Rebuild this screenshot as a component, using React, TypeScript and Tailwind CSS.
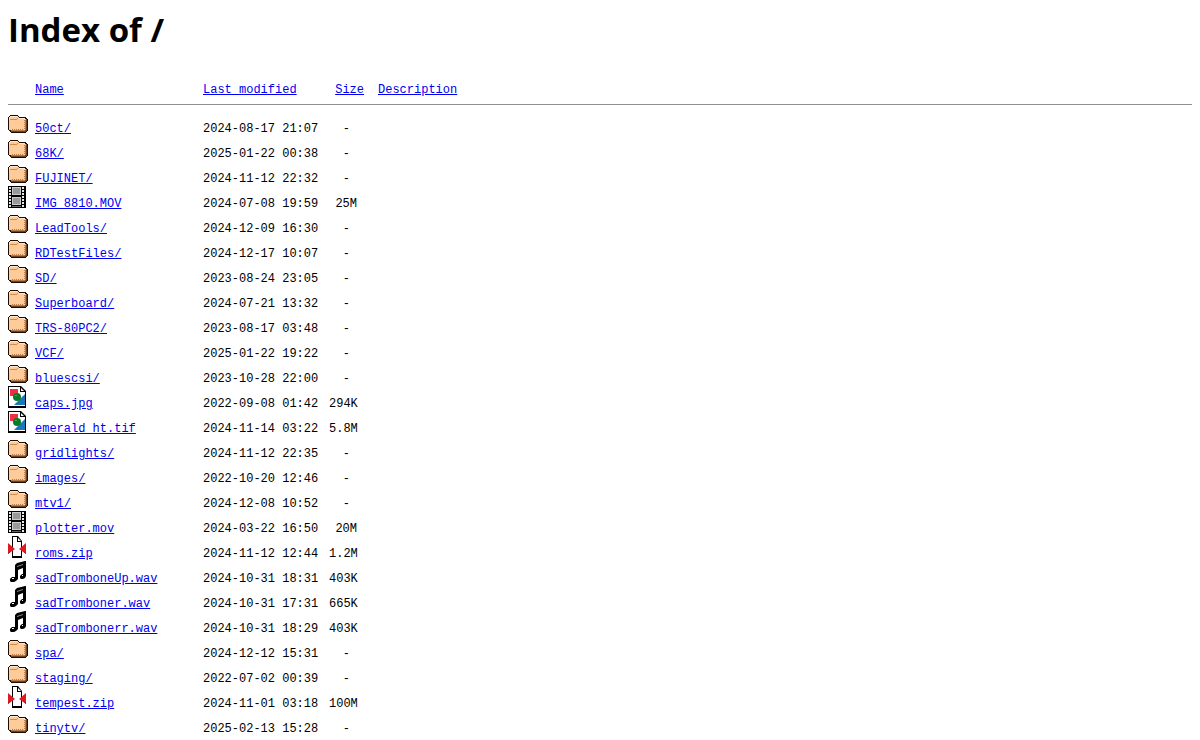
import type { ReactNode } from "react";

type Kind = "folder" | "movie" | "image" | "zip" | "sound";

const drawings: Record<Kind, ReactNode> = {
  folder: (
    <>
      <path d="M2 4h8v1h1v1h7v1h1v1h1v12h-1v1h-1v1H3v-1H2v-1H1v-1H0V6h1V5h1z" fill="#1c0e04" />
      <path d="M3 20h14v-1h1V8h1v12h-1v1H3z" fill="#6e4424" />
      <path d="M2 5h8v1h1v1h6v1h1v11h-1v1H3v-1H1V6h1z" fill="#ffcc99" />
      <path d="M2 5h7v1H2zM1 6h1v3H1zM11 7h6v1h-6z" fill="#ffe6cc" />
      <path d="M2 8h7v1H2zM9 7h1v1H9z" fill="#c88c54" />
      <path d="M4 18h1v1H4zM6 18h1v1H6zM8 18h1v1H8zM10 18h1v1h-1zM12 18h1v1h-1zM14 18h1v1h-1zM16 9h1v1h-1zM16 11h1v1h-1zM16 13h1v1h-1zM16 15h1v1h-1zM16 17h1v1h-1zM3 19h14v1H3zM17 9h1v10h-1z" fill="#b87c4a" />
    </>
  ),
  movie: (
    <>
      <path d="M0 0h18v22H0z" fill="#000" />
      <path d="M1 1h2v2H1zM1 4h2v2H1zM1 7h2v2H1zM1 10h2v2H1zM1 13h2v2H1zM1 16h2v2H1zM1 19h2v2H1zM14 1h2v2h-2zM14 4h2v2h-2zM14 7h2v2h-2zM14 10h2v2h-2zM14 13h2v2h-2zM14 16h2v2h-2zM14 19h2v2h-2z" fill="#e8e8e8" />
      <path d="M4 1h9v8H4zM4 11h9v8H4z" fill="#ccc" />
      <path d="M5 2h7v6H5zM5 12h7v6H5z" fill="#999" />
      <path d="M4 20h9v1H4z" fill="#666" />
    </>
  ),
  image: (
    <>
      <path d="M0 0h13l5 5v17H0z" fill="#000" />
      <path d="M1 1h11v5h5v14H1z" fill="#fff" />
      <path d="M13 2l3 3h-3z" fill="#fff" />
      <path d="M2 3h8v7H2z" fill="#f03040" />
      <path d="M17 8v11H6z" fill="#1878b8" />
      <circle cx="9" cy="11" r="4" fill="#087a28" />
      <path d="M7 9h2v1H7z" fill="#30b850" />
    </>
  ),
  zip: (
    <>
      <path d="M4 0h6l4 5v17H4z" fill="#000" />
      <path d="M5 1h4v5h4v14H5z" fill="#fff" />
      <path d="M10 2l3 3h-3z" fill="#fff" />
      <path d="M0 7l7 6-7 5z" fill="#e01822" />
      <path d="M18 7l-7 6 7 5z" fill="#e01822" />
      <path d="M0 17l3-2-3 3zM18 17l-3-2 3 3z" fill="#801018" />
    </>
  ),
  sound: (
    <>
      <path d="M7 4l2-2 8-2h1v15l-1 2-2 1h-2l-1-1v-2l2-2h1V7l-5 2v9l-2 2-2 1H3l-1-1v-2l2-2h3z" fill="#000" />
      <path d="M9 6l6-2v-1l-6 2z" fill="#888" />
      <path d="M4 17h2v1H4zM14 14h1v1h-1z" fill="#fff" />
    </>
  ),
};

function FileIcon({ kind }: { kind: Kind }) {
  return (
    <svg
      width="20"
      height="22"
      viewBox="0 0 20 22"
      role="img"
      aria-label={kind}
      shapeRendering={kind === "folder" || kind === "movie" ? "crispEdges" : "auto"}
      className="block"
    >
      {drawings[kind]}
    </svg>
  );
}

const files: [Kind, string, string, string][] = [
  ["folder", "50ct/", "2024-08-17 21:07", "-"],
  ["folder", "68K/", "2025-01-22 00:38", "-"],
  ["folder", "FUJINET/", "2024-11-12 22:32", "-"],
  ["movie", "IMG_8810.MOV", "2024-07-08 19:59", "25M"],
  ["folder", "LeadTools/", "2024-12-09 16:30", "-"],
  ["folder", "RDTestFiles/", "2024-12-17 10:07", "-"],
  ["folder", "SD/", "2023-08-24 23:05", "-"],
  ["folder", "Superboard/", "2024-07-21 13:32", "-"],
  ["folder", "TRS-80PC2/", "2023-08-17 03:48", "-"],
  ["folder", "VCF/", "2025-01-22 19:22", "-"],
  ["folder", "bluescsi/", "2023-10-28 22:00", "-"],
  ["image", "caps.jpg", "2022-09-08 01:42", "294K"],
  ["image", "emerald_ht.tif", "2024-11-14 03:22", "5.8M"],
  ["folder", "gridlights/", "2024-11-12 22:35", "-"],
  ["folder", "images/", "2022-10-20 12:46", "-"],
  ["folder", "mtv1/", "2024-12-08 10:52", "-"],
  ["movie", "plotter.mov", "2024-03-22 16:50", "20M"],
  ["zip", "roms.zip", "2024-11-12 12:44", "1.2M"],
  ["sound", "sadTromboneUp.wav", "2024-10-31 18:31", "403K"],
  ["sound", "sadTromboner.wav", "2024-10-31 17:31", "665K"],
  ["sound", "sadTrombonerr.wav", "2024-10-31 18:29", "403K"],
  ["folder", "spa/", "2024-12-12 15:31", "-"],
  ["folder", "staging/", "2022-07-02 00:39", "-"],
  ["zip", "tempest.zip", "2024-11-01 03:18", "100M"],
  ["folder", "tinytv/", "2025-02-13 15:28", "-"],
];

const link = "text-[#0000ee] underline";

export default function App() {
  return (
    <main className="bg-white px-2 pt-2 text-black">
      <h1 className="font-['Open_Sans',sans-serif] text-[33px] leading-[44px] font-bold">Index of /</h1>
      <table className="mt-[31px] w-full table-fixed border-collapse font-['Liberation_Mono',monospace] text-[12px] leading-[14px] whitespace-nowrap">
        <colgroup>
          <col className="w-[27px]" />
          <col className="w-[168px]" />
          <col className="w-[126px]" />
          <col className="w-[35px]" />
          <col />
        </colgroup>
        <thead>
          <tr className="h-[21px] border-b border-[#909090] text-left align-top">
            <td className="p-0" />
            <th className="p-0 font-normal"><a href="?C=N;O=D" className={link}>Name</a></th>
            <th className="p-0 font-normal"><a href="?C=M;O=A" className={link}>Last modified</a></th>
            <th className="p-0 text-right font-normal"><a href="?C=S;O=A" className={link}>Size</a></th>
            <th className="p-0 pl-3.5 font-normal"><a href="?C=D;O=A" className={link}>Description</a></th>
          </tr>
        </thead>
        <tbody>
          <tr aria-hidden="true" className="h-[7px]">
            <td colSpan={5} className="p-0" />
          </tr>
          {files.map(([kind, name, modified, size]) => (
            <tr key={name} className="h-[25px] align-top">
              <td className="p-0"><FileIcon kind={kind} /></td>
              <td className="p-0 pt-[11px]"><a href={name} className={link}>{name}</a></td>
              <td className="p-0 pt-[11px]">{modified}</td>
              <td className={size === "-" ? "p-0 pt-[11px] pr-3.5 text-right" : "p-0 pt-[11px] pr-[7px] text-right"}>{size}</td>
              <td className="p-0" />
            </tr>
          ))}
        </tbody>
      </table>
    </main>
  );
}
